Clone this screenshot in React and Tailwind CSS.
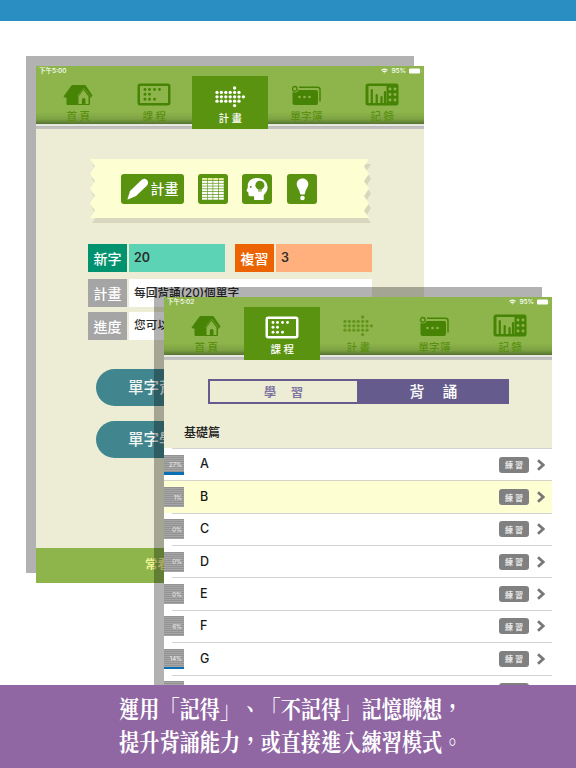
const CJK = "font-['Inter','Noto_Sans_CJK_TC',sans-serif]";

function HomeIcon({ fg, bg }) {
  return (
    <svg width="30" height="22" viewBox="0 0 30 22">
      <path d="M0.500 12.500L8.500 1.500Q9 1 9.500 1H21.500Q22.300 1 22.800 1.500L29.500 11.500L28 13.500H27V20Q27 21 26 21H4.500Q3.500 21 3.500 20V13.500H1.800Z" fill={fg} />
      <path d="M14 12.500L20.800 4.300L27.500 12.500" fill="none" stroke={bg} strokeWidth="0.500" />
      <path d="M15.500 20V12.500L20.500 6L25.500 12.500V20H22.500V15.500Q22.500 14 20.700 14Q18.900 14 18.900 15.500V20Z" fill={bg} />
    </svg>
  );
}

function CourseIcon({ fg }) {
  const dots = [[8, 6.5], [12.500, 6.5], [17.500, 6.5], [22.500, 6.5], [8, 11.300], [12.500, 11.300], [8, 16.200], [12.500, 16.200], [17.500, 16.200]];
  return (
    <svg width="34" height="23" viewBox="0 0 34 23">
      <rect x="1.750" y="1.750" width="30.500" height="19.500" rx="1.500" fill="none" stroke={fg} strokeWidth="2.500" />
      {dots.map(([x, y]) => <circle key={`${x}-${y}`} cx={x} cy={y} r="1.450" fill={fg} />)}
    </svg>
  );
}

function PlanIcon({ fg }) {
  const dots = [];
  for (let c = 0; c < 5; c++) for (let r = 1; r < 4; r++) dots.push([c, r]);
  dots.push([4, 0], [4, 4], [5, 1], [5, 2], [5, 3], [6, 2]);
  return (
    <svg width="31" height="22" viewBox="0 0 31 22">
      {dots.map(([c, r], i) => <circle key={i} cx={2 + c * 4.400} cy={2 + r * 4.400} r="1.650" fill={fg} />)}
    </svg>
  );
}

function NotebookIcon({ fg, bg }) {
  return (
    <svg width="31" height="21" viewBox="0 0 31 21">
      <path d="M8 2.200H26.500Q29 2.200 29 4.500V16.500" fill="none" stroke={fg} strokeWidth="1.500" />
      <rect x="1.500" y="5" width="25.500" height="15" rx="2" fill={fg} />
      <circle cx="3.800" cy="3.800" r="3.800" fill={bg} />
      <circle cx="3.800" cy="3.800" r="2.300" fill="none" stroke={fg} strokeWidth="1.300" />
      {[8.500, 13.500, 18.500].map((x) => <circle key={x} cx={x} cy="12" r="1.300" fill={bg} />)}
    </svg>
  );
}

function RecordIcon({ fg, bg }) {
  return (
    <svg width="34" height="23" viewBox="0 0 34 23">
      <rect x="0.500" y="0.500" width="33" height="22" rx="2.500" fill={fg} />
      <rect x="3.500" y="3" width="18" height="17" fill={bg} />
      <path d="M6.800 7V20M11.700 12V20M16.500 14V20M20 9V20" stroke={fg} strokeWidth="2.200" strokeLinecap="round" />
      {[6, 11.500, 17].map((y) => [25, 30].map((x) => <circle key={`${x}-${y}`} cx={x} cy={y} r="1.450" fill={bg} />))}
    </svg>
  );
}

const TABS = [
  { id: "home", label: "首頁", Icon: HomeIcon },
  { id: "course", label: "課程", Icon: CourseIcon },
  { id: "plan", label: "計畫", Icon: PlanIcon },
  { id: "book", label: "單字簿", Icon: NotebookIcon },
  { id: "record", label: "記錄", Icon: RecordIcon },
];

function Header({ time, active }) {
  return (
    <header className="h-[63px] w-[388px] bg-[linear-gradient(to_bottom,#8db54b_0px,#8db54b_46px,#7da343_53px,#567330_58px,#e8e8e2_58px,#e8e8e2_60px,#bbbbbb_60px,#c4c4c0_63px)]">
      <div className="flex h-[10px] items-center justify-between pl-[3px] pr-[2px] text-[6.500px] font-medium leading-none text-white">
        <span>{time}</span>
        <span className="flex items-center gap-[3px]">
          <svg width="7" height="6" viewBox="0 0 14 11">
            <path d="M0 3.500Q7-3 14 3.500L12.300 5.200Q7 0.500 1.700 5.200ZM2.700 6.200Q7 2.500 11.300 6.200L9.600 8Q7 5.800 4.400 8ZM5.400 9Q7 7.700 8.600 9L7 10.700Z" fill="#fff" />
          </svg>
          <span>95%</span>
          <svg width="13" height="6" viewBox="0 0 13 6">
            <rect x="0" y="0.500" width="11" height="5" rx="1.200" fill="#fff" />
            <path d="M12 2Q12.800 3 12 4Z" fill="#fff" />
          </svg>
        </span>
      </div>
      <nav className="flex h-[53px] pl-1">
        {TABS.map(({ id, label, Icon }) => {
          const on = id === active;
          return (
            <div key={id} className={on ? "flex w-[76px] flex-col items-center bg-[#5a9310] text-white" : "flex w-[76px] flex-col items-center text-[#5b8f12]"}>
              <div className={on ? "flex h-[33px] items-end justify-center pb-[1px]" : "flex h-[31px] items-end justify-center pb-[1px]"}>
                <Icon fg={on ? "#ffffff" : id === "plan" ? "#64961e" : "#478305"} bg={on ? "#5a9310" : "#8db54b"} />
              </div>
              <div className={label.length > 2 ? "mt-[3px] pl-px text-[10.500px] font-medium leading-[13px] tracking-[0.400px]" : "mt-[3px] pl-[3px] text-[10.500px] font-medium leading-[13px] tracking-[2.500px]"}>{label}</div>
            </div>
          );
        })}
      </nav>
    </header>
  );
}

function zigzag(dx, dy) {
  const pts = [];
  for (let i = 0; i <= 8; i++) pts.push([i % 2 ? 5 : 0, i * 7.375]);
  for (let i = 8; i >= 0; i--) pts.push([i % 2 ? 274 : 279, i * 7.375]);
  return pts.map(([x, y]) => `${x + dx},${y + dy}`).join(" ");
}

function Banner() {
  const btn = "flex h-[30px] items-center justify-center rounded-[3px] bg-[#5a9310]";
  return (
    <div className="relative ml-[54px] mt-[30px] h-[64px] w-[281px]">
      <svg className="absolute inset-0" width="281" height="64" viewBox="0 0 281 64">
        <polygon points={zigzag(2, 5)} fill="#d7d7bd" />
        <polygon points={zigzag(0, 0)} fill="#fdffd2" />
      </svg>
      <div className="relative flex pl-[31px] pt-[15px]">
        <div className={`${btn} mr-[14px] w-[63px] gap-[2px]`}>
          <svg width="22" height="22" viewBox="0 0 22 22">
            <path d="M3 13L14 2.500Q17-0.500 20 2Q22.500 5 19.500 8L9 18L1 21.500Q0.500 21.500 0.500 21Z" fill="#fff" />
          </svg>
          <span className="text-[14px] font-medium leading-none text-white">計畫</span>
        </div>
        <div className={`${btn} mr-[14px] w-[30px]`}>
          <svg width="22" height="22" viewBox="0 0 22 22">
            {[0, 1, 2, 3, 4, 5, 6, 7].map((r) => [0, 1, 2, 3].map((c) => (
              <rect key={`${r}-${c}`} x={c * 5.600} y={r * 2.800} width="5" height="2.100" fill={r ? "#fff" : "#e5eda0"} />
            )))}
          </svg>
        </div>
        <div className={`${btn} mr-[15px] w-[30px]`}>
          <svg width="24" height="24" viewBox="0 0 24 25">
            <path d="M9 24V20H5Q3 20 3 18V16L1 14.500L2.500 10.500C1.500 5 6 1 12 1C19 1 23 5.500 23 11C23 15 20.500 17 19 19V24Z" fill="#fff" />
            <circle cx="15" cy="8.500" r="4.700" fill="#5a9310" />
            <path d="M13 12H17V15H13Z" fill="#5a9310" />
            <path d="M13 13.600H17" stroke="#fff" strokeWidth="0.700" />
            <circle cx="5.500" cy="10.500" r="1" fill="#5a9310" />
          </svg>
        </div>
        <div className={`${btn} w-[30px]`}>
          <svg width="13" height="23" viewBox="0 0 13 23">
            <path d="M6.500 0.500C10 0.500 12.300 3 12.300 6C12.300 9.500 9.500 11 9 15.500Q9 16.500 8 16.500H5Q4 16.500 4 15.500C3.500 11 0.700 9.500 0.700 6C0.700 3 3 0.500 6.500 0.500Z" fill="#fff" />
            <circle cx="6.500" cy="20" r="2.300" fill="#fff" />
          </svg>
        </div>
      </div>
    </div>
  );
}

function Label({ children, tone }) {
  return <div className={`mr-[2px] flex w-[39px] shrink-0 items-center justify-center text-[14px] font-medium text-white ${tone}`}>{children}</div>;
}

function PlanScreen() {
  return (
    <section className="absolute left-[36px] top-[66px] flex h-[517px] w-[388px] flex-col bg-[#edecd5] shadow-[-10px_-10px_0_0_#b2b2b2]">
      <Header time="下午5:00" active="plan" />
      <Banner />
      <div className="ml-[52px] mt-[21px] w-[284px] text-[12.500px] font-medium text-[#2b2d2a]">
        <div className="flex h-[28px]">
          <Label tone="bg-[#01936f]">新字</Label>
          <div className="mr-[10px] flex w-[96px] items-center bg-[#5dd3b5] pl-[5px] font-semibold">20</div>
          <Label tone="bg-[#ec6402]">複習</Label>
          <div className="flex w-[96px] items-center bg-[#ffb07c] pl-[5px] font-semibold">3</div>
        </div>
        <div className="mt-[7px] flex h-[28px]">
          <Label tone="bg-[#a5a5a5]">計畫</Label>
          <div className="flex flex-1 items-center whitespace-nowrap bg-white pl-[5px] pt-px text-[11.700px]">每回背誦(20)個單字</div>
        </div>
        <div className="mt-[5px] flex h-[28px]">
          <Label tone="bg-[#a5a5a5]">進度</Label>
          <div className="flex flex-1 items-center whitespace-nowrap bg-white pl-[5px] text-[11.700px]">您可以</div>
        </div>
      </div>
      <div className="ml-[60px] mt-[29px] flex h-[37px] w-[268px] items-center rounded-full bg-[#41858f] pl-[32px] text-[15.500px] font-medium text-[#f0f3f0]">單字背誦</div>
      <div className="ml-[60px] mt-[15px] flex h-[37px] w-[268px] items-center rounded-full bg-[#41858f] pl-[32px] text-[15.500px] font-medium text-[#f0f3f0]">單字學習</div>
      <footer className="mt-auto flex h-[35px] items-center bg-[#8db54b] pl-[109px] text-[12.500px] font-bold text-[#f3f291]">常看</footer>
    </section>
  );
}

const ROWS = [["A", "27%", 3], ["B", "1%", 0], ["C", "0%", 0], ["D", "0%", 0], ["E", "0%", 0], ["F", "6%", 0], ["G", "14%", 2], ["H", "", 0]];

function CourseScreen() {
  return (
    <section className="absolute left-[164px] top-[297px] h-[388px] w-[388px] overflow-hidden bg-white">
      <Header time="下午5:02" active="course" />
      <div className="h-[88px] bg-[#edecd5] pt-[19px]">
        <div className="ml-[44px] flex h-[25px] w-[301px] bg-[#655c8d] p-[2px] font-medium">
          <div className="flex w-[147px] items-center justify-center bg-[#edecd5] pt-[3px] text-[12px] font-bold text-[#7d75a2]">學<span className="w-[15px]" />習</div>
          <div className="flex flex-1 items-center justify-center pl-[3px] pt-px text-[15px] text-white">背<span className="w-[18px]" />誦</div>
        </div>
        <div className="mt-[19px] pl-[20px] text-[12px] font-medium leading-[20px] text-[#20201c]">基礎篇</div>
      </div>
      <div>
        {ROWS.map(([name, percent, bar]) => (
          <div key={name} className={name === "B" ? "flex h-[32.360px] items-center bg-[linear-gradient(#d4d4cb_1px,#fdffd2_1px)]" : "flex h-[32.360px] items-center bg-[linear-gradient(to_right,white_8px,transparent_8px),linear-gradient(#d2d2d2_1px,white_1px)]"}>
            <div className="relative mt-[1px] flex h-[20px] w-[20px] items-center justify-end bg-[repeating-linear-gradient(to_bottom,#939393_0px,#939393_1px,#a6a6a6_1px,#a6a6a6_2px)] pr-[2px] pt-[1px] text-[6px] leading-none text-[#f0f0f0]">
              {percent}
              <span className="absolute bottom-0 left-0 w-full bg-[#0870b2]" style={{ height: bar }} />
            </div>
            <div className="ml-[16px] mt-px text-[12.500px] font-medium leading-none text-[#191919]">{name === "H" ? "" : name}</div>
            <div className="ml-auto mt-[1px] flex h-[16px] w-[30px] items-center justify-center rounded-[3px] bg-[#808080] pl-[2px] pt-px text-[8px] font-bold tracking-[2px] text-[#e6e6e6]">{percent ? "練習" : ""}</div>
            <svg className="ml-[8px] mr-[7px] mt-[1px]" width="8" height="12" viewBox="0 0 8 12">
              <path d="M1 1.200L6.200 6L1 10.800" fill="none" stroke="#777" strokeWidth="2.700" />
            </svg>
          </div>
        ))}
      </div>
    </section>
  );
}

export default function App() {
  return (
    <main className={`relative flex h-[768px] w-[576px] flex-col justify-between overflow-hidden bg-white ${CJK}`}>
      <div className="h-[21px] bg-[#2a8ec2]" />
      <PlanScreen />
      <div className="absolute left-[154px] top-[287px] h-[517px] w-[388px] bg-black/30" />
      <CourseScreen />
      <div className="relative h-[83px] bg-[#9066a3] pl-[119px] pt-[6px] text-white">
        <div className="w-[420px] origin-left scale-x-[0.842] whitespace-nowrap font-['Noto_Serif_CJK_TC','Noto_Sans_CJK_TC',serif] text-[24px] font-bold leading-[33px] [text-spacing-trim:space-all]">
          <p>運用「記得」、「不記得」記憶聯想，</p>
          <p>提升背誦能力，或直接進入練習模式。</p>
        </div>
      </div>
    </main>
  );
}
